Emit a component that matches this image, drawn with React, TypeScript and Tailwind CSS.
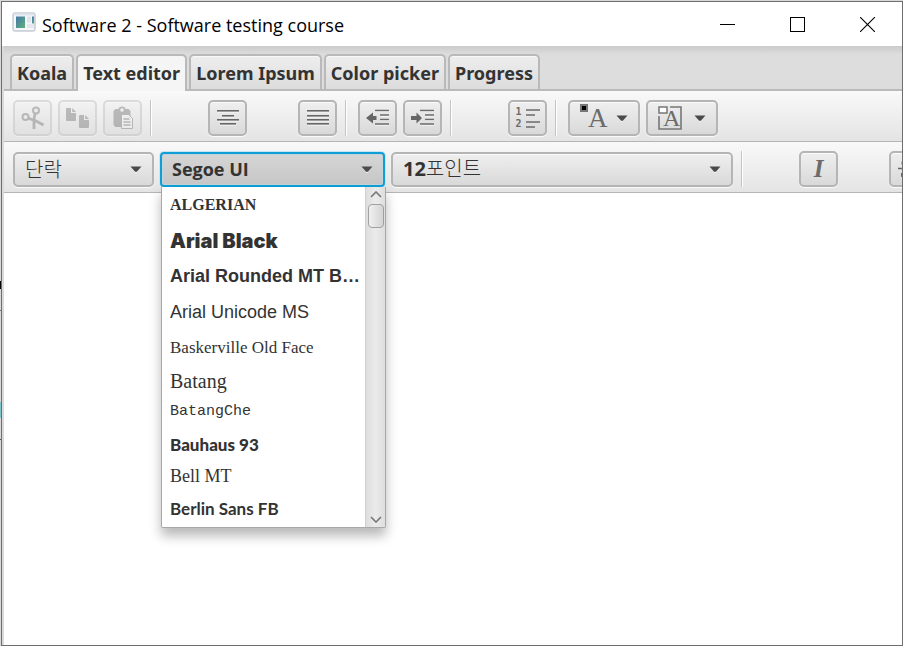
import { useState, type ReactNode } from "react";
import { clsx } from "clsx";

const raised =
  "rounded-[5px] border-2 border-[#b5b5b5] bg-linear-to-b from-[#efefef] to-[#d9d9d9] shadow-[0_1px_1px_#fcfcfc,inset_0_1px_0_#fafafa]";

function ToolButton({ label, disabled, children }: { label: string; disabled?: boolean; children: ReactNode }) {
  return (
    <button
      type="button"
      aria-label={label}
      disabled={disabled}
      className={clsx(
        "flex h-9 w-[39px] shrink-0 items-center justify-center text-[#6b6b6b]",
        raised,
        disabled && "opacity-40",
      )}
    >
      {children}
    </button>
  );
}

function Separator() {
  return (
    <div className="flex h-9 w-[9px] shrink-0 pl-0.5">
      <div className="w-px bg-[#c4c4c4]" />
      <div className="w-px bg-white" />
    </div>
  );
}

function Gap() {
  return <div className="w-[39px] shrink-0" />;
}

function Arrow({ className }: { className?: string }) {
  return (
    <svg viewBox="0 0 12 7" className={clsx("h-[7px] w-3 shrink-0", className)} aria-hidden="true">
      <path d="M0.5 0.5h11L6.800 5.800H5.200z" fill="#4a4a4a" />
      <path d="M5 6.500h2" stroke="#fff" strokeWidth="0.6" />
    </svg>
  );
}

function ColorButton({ label, children }: { label: string; children: ReactNode }) {
  return (
    <button
      type="button"
      aria-label={label}
      className={clsx("flex h-9 w-[72px] shrink-0 items-center justify-between px-2.5", raised)}
    >
      {children}
      <Arrow />
    </button>
  );
}

function Combo({
  label,
  options,
  width,
  focused,
  font,
  children,
}: {
  label: string;
  options: string[];
  width: string;
  focused?: boolean;
  font: string;
  children?: ReactNode;
}) {
  return (
    <div className={clsx("relative shrink-0", width)}>
      <select
        aria-label={label}
        className={clsx(
          "block h-[35px] w-full appearance-none pl-2.5 text-[#333] outline-none",
          font,
          focused
            ? "rounded-[4px] border-2 border-[#0f9fd6] bg-linear-to-b from-[#d6d6d6] to-[#c6c6c6] shadow-[0_0_0_1px_#c8e6f2,inset_0_0_0_1px_#c3d3da]"
            : raised,
        )}
      >
        {options.map((o) => (
          <option key={o}>{o}</option>
        ))}
      </select>
      <Arrow className="pointer-events-none absolute top-[14px] right-3" />
      {children}
    </div>
  );
}

const fonts = [
  { name: "ALGERIAN", row: "h-9 text-[16px] font-bold font-['Liberation_Serif',serif]" },
  { name: "Arial Black", row: "h-9 text-[20px] font-black font-['Inter',sans-serif]" },
  { name: "Arial Rounded MT Bold", row: "h-9 text-[18px] font-bold font-['Liberation_Sans',sans-serif]" },
  { name: "Arial Unicode MS", row: "h-9 text-[18px] font-['Liberation_Sans',sans-serif]" },
  { name: "Baskerville Old Face", row: "h-[34px] text-[17px] font-['Liberation_Serif',serif]" },
  { name: "Batang", row: "h-8 text-[20px] font-['Liberation_Serif',serif]" },
  { name: "BatangChe", row: "h-8 text-[15px] font-['Liberation_Mono',monospace]" },
  { name: "Bauhaus 93", row: "h-8 text-[17px] font-black font-['Lato',sans-serif]" },
  { name: "Bell MT", row: "h-8 text-[18px] font-['Liberation_Serif',serif]" },
  { name: "Berlin Sans FB", row: "h-8 text-[17px] font-bold font-['Lato',sans-serif]" },
];

function FontList() {
  return (
    <div className="absolute top-[35px] left-px z-10 flex w-[225px] rounded-b-xs border border-t-0 border-[#a8a8a8] bg-white shadow-[0_8px_12px_rgba(0,0,0,0.28)]">
      <ul role="listbox" aria-label="Font family" className="min-w-0 flex-1 pb-0.5 text-[#333]">
        {fonts.map((f) => (
          <li key={f.name} role="option" aria-selected={false} className={clsx("flex items-center pr-1 pl-2", f.row)}>
            <span className="truncate">{f.name}</span>
          </li>
        ))}
      </ul>
      <div className="flex w-5 flex-col items-center justify-between border-l border-[#d0d0d0] bg-linear-to-r from-[#dedede] via-[#ebebeb] to-[#dedede] pt-1 pb-1">
        <div className="flex flex-col items-center gap-1.5">
          <svg viewBox="0 0 12 7" className="h-[7px] w-3" fill="none" stroke="#777" strokeWidth="1.6" aria-hidden="true">
            <path d="M1 6l5-5 5 5" />
          </svg>
          <div className="h-6 w-4 rounded-[4px] border border-[#a0a0a0] bg-linear-to-r from-[#f0f0f0] to-[#d4d4d4]" />
        </div>
        <svg viewBox="0 0 12 7" className="h-[7px] w-3" fill="none" stroke="#777" strokeWidth="1.6" aria-hidden="true">
          <path d="M1 1l5 5 5-5" />
        </svg>
      </div>
    </div>
  );
}

function Lines({ rows }: { rows: [number, number, number][] }) {
  return (
    <svg viewBox="0 0 22 18" className="h-[18px] w-[22px]" aria-hidden="true">
      {rows.map(([x, y, w]) => (
        <g key={y}>
          <rect x={x} y={y + 1.4} width={w} height="1" fill="#fff" />
          <rect x={x} y={y} width={w} height="1.6" fill="#666" />
        </g>
      ))}
    </svg>
  );
}

function Indent({ d }: { d: string }) {
  return (
    <svg viewBox="0 0 24 18" className="h-[18px] w-6" aria-hidden="true">
      <path d="M9 2.500h14M14 7h9M14 11.500h9M9 16h14" stroke="#fff" />
      <path d="M9 1.500h14M14 6h9M14 10.500h9M9 15h14" stroke="#6b6b6b" strokeWidth="1.500" />
      <path d={d} fill="#666" />
    </svg>
  );
}

const tabs = ["Koala", "Text editor", "Lorem Ipsum", "Color picker", "Progress"];

export default function App() {
  const [active, setActive] = useState("Text editor");
  return (
    <div className="flex min-h-screen bg-[#d9d9d9] font-['Open_Sans','Noto_Sans_CJK_KR',sans-serif]">
      <div className="flex w-px shrink-0 flex-col">
        <div className="h-[281px]" />
        <div className="h-2 bg-black" />
        <div className="h-[21px]" />
        <div className="h-px bg-[#777]" />
        <div className="h-[91px]" />
        <div className="h-4 bg-[#7fc4c8]" />
        <div className="h-[21px]" />
        <div className="h-px bg-[#555]" />
      </div>
      <div className="mt-px flex min-w-0 flex-1 flex-col overflow-hidden border border-[#6e6e6e] bg-white">
        <header className="flex h-11 shrink-0 items-center">
          <svg viewBox="0 0 24 20" className="mb-1 ml-2.5 h-5 w-6" aria-hidden="true">
            <defs>
              <linearGradient id="pane" x1="0" y1="0" x2="1" y2="1">
                <stop offset="0" stopColor="#4377a8" />
                <stop offset="1" stopColor="#5fb07c" />
              </linearGradient>
            </defs>
            <rect x="1" y="1" width="22" height="18" rx="1.500" fill="#f4f6f9" stroke="#aab2c0" />
            <path d="M2 2.500h20" stroke="#dfe5ee" strokeWidth="2" />
            <rect x="4" y="4.500" width="9" height="11.500" fill="url(#pane)" />
            <rect x="15" y="4.500" width="4" height="6" fill="#dfe4ea" />
            <rect x="20" y="4.500" width="2" height="7" fill="url(#pane)" />
            <rect x="15" y="12" width="7" height="4" fill="#e4e8ee" />
          </svg>
          <h1 className="ml-1.5 flex-1 truncate pt-0.5 text-[18px] text-black">Software 2 - Software testing course</h1>
          <button type="button" aria-label="Minimize" className="flex h-full w-[69px] items-center justify-center">
            <svg viewBox="0 0 15 15" className="size-[15px]" shapeRendering="crispEdges" aria-hidden="true">
              <rect y="7" width="15" height="1" />
            </svg>
          </button>
          <button type="button" aria-label="Maximize" className="flex h-full w-[71px] items-center justify-center">
            <svg viewBox="0 0 15 15" className="size-[15px]" aria-hidden="true">
              <rect x="0.5" y="0.5" width="14" height="14" fill="none" stroke="#000" />
            </svg>
          </button>
          <button type="button" aria-label="Close" className="flex h-full w-[69px] items-center justify-center">
            <svg viewBox="0 0 15 15" className="size-[15px]" aria-hidden="true">
              <path d="M0 0l15 15M15 0L0 15" stroke="#000" strokeWidth="1.100" />
            </svg>
          </button>
        </header>

        <main className="flex flex-1 flex-col border-l-2 border-[#dadada]">
          <div
            role="tablist"
            className="flex h-[45px] shrink-0 items-end gap-0.5 border-b-2 border-[#bababa] bg-linear-to-b from-[#cbcbcb] to-[#dddddd] to-20% pl-1.5"
          >
            {tabs.map((t) => (
              <button
                key={t}
                type="button"
                role="tab"
                aria-selected={t === active}
                onClick={() => setActive(t)}
                className={clsx(
                  "rounded-t-[5px] border-2 border-b-0 border-[#b9b9b9] px-[5px] font-['Noto_Sans',sans-serif] text-[18px] leading-6 font-bold text-[#333]",
                  t === active
                    ? "-mb-0.5 h-[37px] bg-[#f5f5f5] pb-0.5"
                    : "h-[35px] bg-linear-to-b from-[#eeeeee] to-[#dcdcdc] shadow-[inset_0_1px_0_#f8f8f8]",
                )}
              >
                {t}
              </button>
            ))}
          </div>

          <div
            role="toolbar"
            aria-label="Paragraph"
            className="flex h-[51px] shrink-0 items-center gap-1.5 border-b border-[#b5b5b5] bg-linear-to-b from-[#f9f9f9] to-[#e4e4e4] pt-1 pl-[9px]"
          >
            <ToolButton label="Cut" disabled>
              <svg viewBox="0 0 24 24" className="size-6" fill="none" stroke="#666" aria-hidden="true">
                <circle cx="4.500" cy="11" r="3" strokeWidth="2" />
                <circle cx="15" cy="4.500" r="3" strokeWidth="2" />
                <path d="M7 11.800C11 14.500 12 13 16 15.500L22.500 19M14.500 7.500C12.500 10 13 14 13 23" strokeWidth="2.800" />
              </svg>
            </ToolButton>
            <ToolButton label="Copy" disabled>
              <svg viewBox="0 0 24 22" className="h-[22px] w-6" fill="#666" aria-hidden="true">
                <path d="M0 2q0-1 1-1h4v5h5v7q0 1-1 1H1q-1 0-1-1zM6.200 1L10 5H6.200zM13 9q0-1 1-1h4v5h5v7q0 1-1 1h-8q-1 0-1-1zM19.200 8l3.800 4h-3.800z" />
              </svg>
            </ToolButton>
            <ToolButton label="Paste" disabled>
              <svg viewBox="0 0 20 24" className="h-6 w-5" fill="#666" aria-hidden="true">
                <path d="M2.500 3h2.800a4 4 0 0 1 7.400 0H15.500l2 2v14l-2 2H2.500l-2-2V5z" />
                <circle cx="9" cy="4" r="1.800" fill="#eee" />
                <path d="M8.500 8.500h7l4 4v10h-11z" fill="#eee" stroke="#666" />
                <path d="M10.500 13h6M10.500 16h7M10.500 19h7" stroke="#666" strokeWidth="1.400" />
              </svg>
            </ToolButton>
            <Separator />
            <Gap />
            <ToolButton label="Align center">
              <Lines rows={[[0, 1, 22], [5, 6, 12], [0, 10, 22], [3, 14, 16]]} />
            </ToolButton>
            <Gap />
            <ToolButton label="Justify">
              <Lines rows={[[0, 1, 22], [0, 6, 22], [0, 10, 22], [0, 14, 22]]} />
            </ToolButton>
            <Separator />
            <ToolButton label="Outdent">
              <Indent d="M0 9l7-5.500V7h3.500v4H7v3.500z" />
            </ToolButton>
            <ToolButton label="Indent">
              <Indent d="M11 9L5.500 3.500V7H0v4h5.500v3.500z" />
            </ToolButton>
            <Separator />
            <Gap />
            <ToolButton label="Numbered list">
              <span className="flex items-center gap-1">
                <span className="flex flex-col font-['DejaVu_Sans_Mono',monospace] text-[10px] leading-3 font-bold">
                  <span>1</span>
                  <span>2</span>
                </span>
                <svg viewBox="0 0 14 20" className="h-5 w-3.5" aria-hidden="true">
                  <path d="M0 2h14M0 7h9M0 14h14M0 19h9" stroke="#6b6b6b" strokeWidth="1.500" />
                </svg>
              </span>
            </ToolButton>
            <Separator />
            <ColorButton label="Foreground color">
              <span className="flex items-start">
                <span className="size-2 border-2 border-[#777] bg-black" />
                <span className="font-['Liberation_Serif',serif] text-[27px] leading-7 text-[#6b6b6b]">A</span>
              </span>
            </ColorButton>
            <ColorButton label="Background color">
              <svg viewBox="0 0 24 24" className="size-6" fill="none" stroke="#777" aria-hidden="true">
                <path d="M12 1h11v22H1V10" strokeWidth="1.600" />
                <rect x="1" y="1" width="8" height="6" fill="#fff" strokeWidth="1.500" />
                <text
                  x="5"
                  y="20"
                  fill="#6b6b6b"
                  stroke="none"
                  className="font-['Liberation_Serif',serif] text-[24px]"
                >
                  A
                </text>
              </svg>
            </ColorButton>
          </div>

          <div
            role="toolbar"
            aria-label="Font"
            className="relative z-10 flex h-[51px] shrink-0 items-center gap-1.5 border-b border-[#b5b5b5] bg-linear-to-b from-[#f9f9f9] to-[#e4e4e4] pt-1 pl-[9px]"
          >
            <Combo
              label="Format"
              options={["단락"]}
              width="w-[141px]"
              font="text-[20px] font-light font-['Noto_Sans_CJK_KR',sans-serif]"
            />
            <Combo label="Font family" options={["Segoe UI"]} width="w-[225px]" focused font="text-[18px] font-bold">
              <FontList />
            </Combo>
            <Combo
              label="Font size"
              options={["12포인트"]}
              width="w-[342px]"
              font="text-[20px] font-bold [font-synthesis:none] font-['Open_Sans','Noto_Sans_CJK_KR_Light','Noto_Sans_CJK_KR',sans-serif]"
            />
            <Separator />
            <Gap />
            <ToolButton label="Italic">
              <span className="font-['Liberation_Serif',serif] text-[25px] leading-7 font-bold italic">I</span>
            </ToolButton>
            <Gap />
            <ToolButton label="Strikethrough">
              <svg viewBox="0 0 22 22" className="size-[22px]" aria-hidden="true">
                <path d="M0 10.500h22" stroke="#666" strokeWidth="1.500" />
                <path d="M17 6V2.500C13 0 4 1 4.500 5.500S17 11 17 15.500 8 21 4 18v-3" fill="none" stroke="#666" strokeWidth="2" />
              </svg>
            </ToolButton>
          </div>

          <div
            role="textbox"
            aria-multiline="true"
            aria-label="Document"
            contentEditable
            suppressContentEditableWarning
            className="min-h-[360px] flex-1 bg-white outline-none"
          />
        </main>
      </div>
    </div>
  );
}
